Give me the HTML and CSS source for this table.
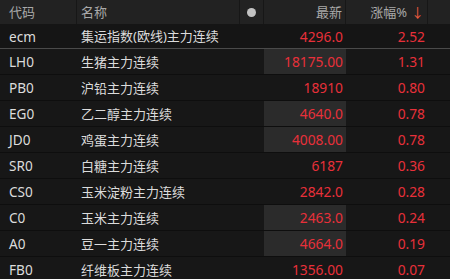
FILE: index.html
```html
<!DOCTYPE html>
<html lang="zh">
<head>
<meta charset="utf-8">
<link rel="stylesheet" href="styles.css">
</head>
<body>
<div class="quote">
  <div class="row head">
    <div class="c code">代码</div>
    <div class="c name">名称</div>
    <div class="c dotc"><span class="dot"></span></div>
    <div class="c num">最新</div>
    <div class="c num">涨幅% <span class="arrow">↓</span></div>
    <div class="c tail"></div>
  </div>
  <div class="row sel">
    <div class="c code">ecm</div><div class="c name">集运指数(欧线)主力连续</div><div class="c dotc"></div>
    <div class="c num up">4296.0</div><div class="c num up">2.52</div><div class="c tail"></div>
  </div>
  <div class="row">
    <div class="c code">LH0</div><div class="c name">生猪主力连续</div><div class="c dotc"></div>
    <div class="c num up hl">18175.00</div><div class="c num up">1.31</div><div class="c tail"></div>
  </div>
  <div class="row">
    <div class="c code">PB0</div><div class="c name">沪铅主力连续</div><div class="c dotc"></div>
    <div class="c num up">18910</div><div class="c num up">0.80</div><div class="c tail"></div>
  </div>
  <div class="row">
    <div class="c code">EG0</div><div class="c name">乙二醇主力连续</div><div class="c dotc"></div>
    <div class="c num up hl">4640.0</div><div class="c num up">0.78</div><div class="c tail"></div>
  </div>
  <div class="row">
    <div class="c code">JD0</div><div class="c name">鸡蛋主力连续</div><div class="c dotc"></div>
    <div class="c num up hl">4008.00</div><div class="c num up">0.78</div><div class="c tail"></div>
  </div>
  <div class="row">
    <div class="c code">SR0</div><div class="c name">白糖主力连续</div><div class="c dotc"></div>
    <div class="c num up">6187</div><div class="c num up">0.36</div><div class="c tail"></div>
  </div>
  <div class="row">
    <div class="c code">CS0</div><div class="c name">玉米淀粉主力连续</div><div class="c dotc"></div>
    <div class="c num up">2842.0</div><div class="c num up">0.28</div><div class="c tail"></div>
  </div>
  <div class="row">
    <div class="c code">C0</div><div class="c name">玉米主力连续</div><div class="c dotc"></div>
    <div class="c num up hl">2463.0</div><div class="c num up">0.24</div><div class="c tail"></div>
  </div>
  <div class="row">
    <div class="c code">A0</div><div class="c name">豆一主力连续</div><div class="c dotc"></div>
    <div class="c num up hl">4664.0</div><div class="c num up">0.19</div><div class="c tail"></div>
  </div>
  <div class="row">
    <div class="c code">FB0</div><div class="c name">纤维板主力连续</div><div class="c dotc"></div>
    <div class="c num up">1356.00</div><div class="c num up">0.07</div><div class="c tail"></div>
  </div>
</div>
</body>
</html>
```
FILE: styles.css
```css
html, body {
  margin: 0;
  padding: 0;
  background: #161616;
  overflow: hidden;
}
.quote {
  width: 450px;
  font-family: "Noto Sans", "Noto Sans CJK SC", sans-serif;
  font-size: 13px;
  color: #dcdcdc;
}
.row {
  display: grid;
  grid-template-columns: 77px 163px 24px 82px 82px 22px;
  height: 25px;
  border-bottom: 1px solid #0e0e0e;
  background: #171717;
}
.row.head {
  height: 24px;
  border-bottom: none;
  background: #222222;
  color: #a9a9a9;
}
.row.sel {
  height: 24px;
  border-bottom: 1px solid #4a4a4a;
  background: #151515;
}
.c {
  display: flex;
  align-items: center;
  white-space: nowrap;
  overflow: hidden;
  line-height: 1;
  padding-top: 1px;
}
.head .c {
  border-right: 1px solid #171717;
  font-size: 13px;
  padding-top: 0;
}
.head .c.tail {
  border-right: none;
}
.code {
  padding-left: 9px;
  font-size: 13.6px;
}
.name {
  padding-left: 4px;
}
.num {
  justify-content: flex-end;
  padding-right: 3px;
  font-size: 13.8px;
}
.up {
  color: #e8303a;
}
.hl {
  background: #2b2b2b;
}
.dotc {
  justify-content: center;
}
.dot {
  width: 9px;
  height: 9px;
  border-radius: 50%;
  background: #c2c2c2;
}
.arrow {
  color: #ee5a3e;
  margin-left: 4px;
}
```
